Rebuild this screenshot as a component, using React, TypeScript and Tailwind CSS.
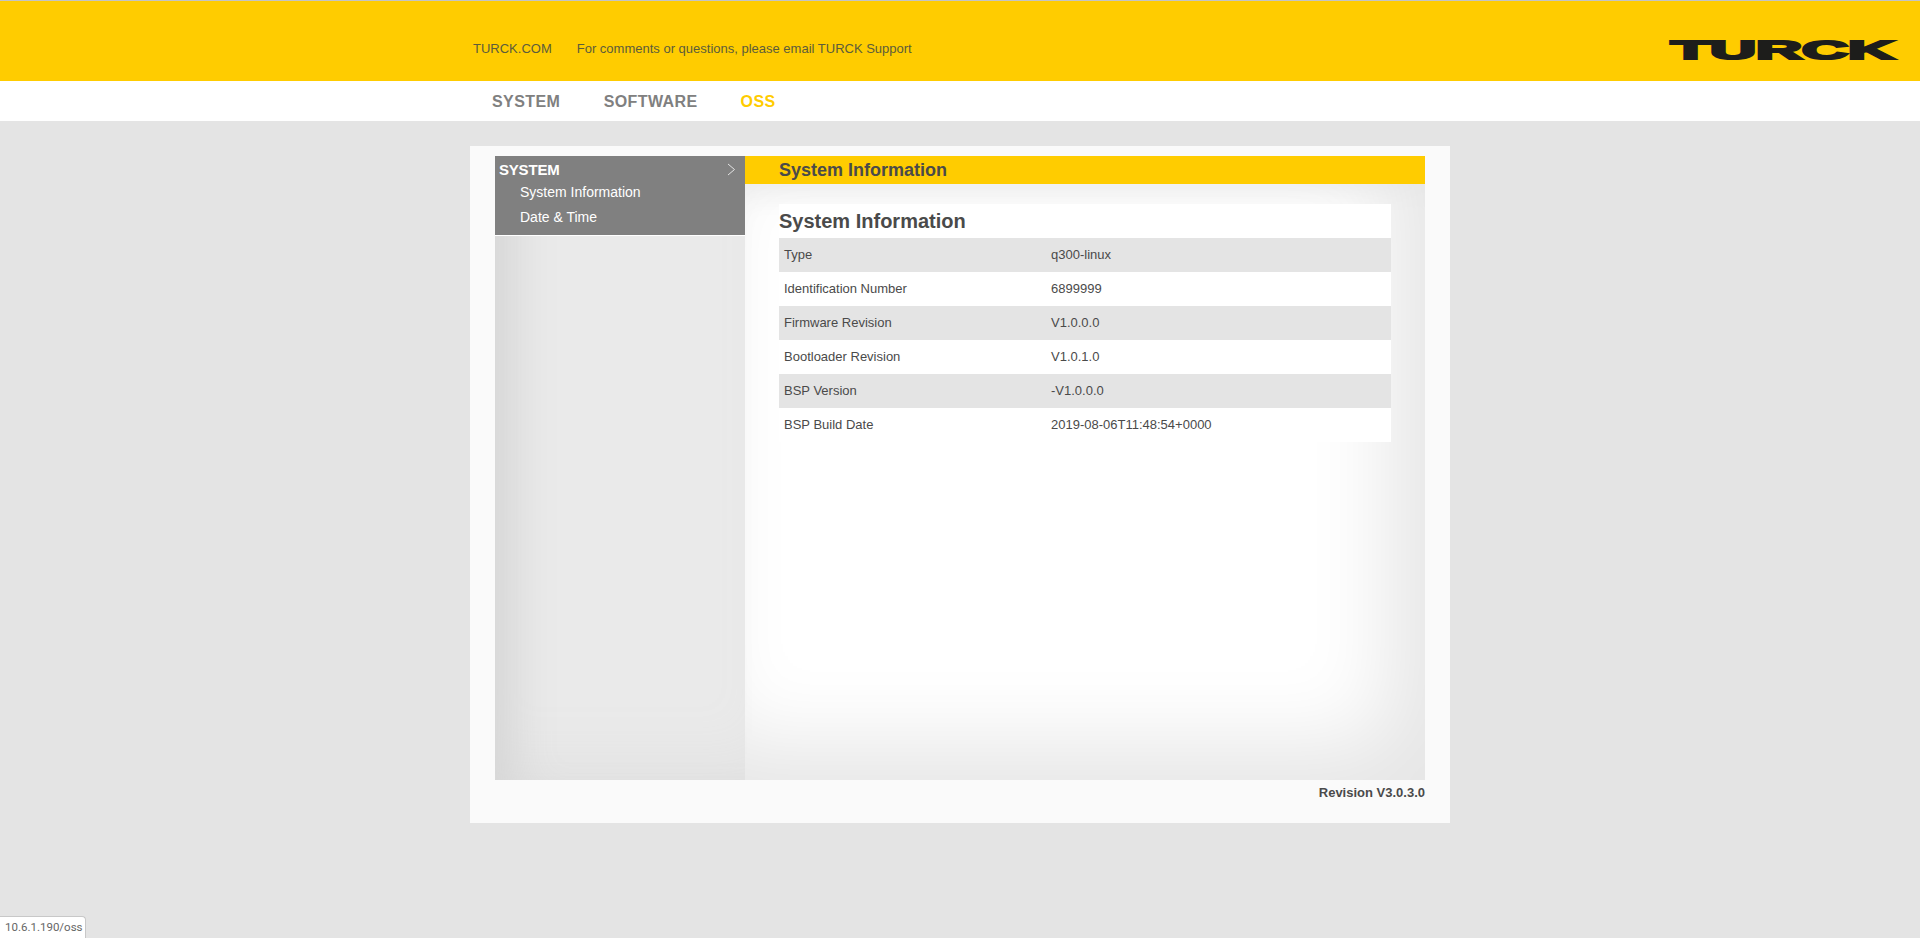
const rows = [
  ["Type", "q300-linux"],
  ["Identification Number", "6899999"],
  ["Firmware Revision", "V1.0.0.0"],
  ["Bootloader Revision", "V1.0.1.0"],
  ["BSP Version", "-V1.0.0.0"],
  ["BSP Build Date", "2019-08-06T11:48:54+0000"],
];

function Logo() {
  return (
    <svg width="231" height="25" viewBox="0 0 231 25" className="block overflow-visible">
      <text
        x="4"
        y="22"
        textLength="223"
        lengthAdjust="spacingAndGlyphs"
        fontFamily="'Liberation Sans', Arial, sans-serif"
        fontWeight="700"
        fontSize="26.5"
        fill="#1d1d1b"
        stroke="#1d1d1b"
        strokeWidth="2.2"
      >
        TURCK
      </text>
    </svg>
  );
}

export default function App() {
  return (
    <div className="relative min-h-screen bg-[#e4e4e4] font-['Liberation_Sans',Arial,sans-serif] text-[#4a4a4a]">
      <header className="h-[81px] border-t border-[#c4c4c4] bg-[#ffcc00] relative">
        <div className="mx-auto w-[980px] flex items-center h-full pt-[15px] pl-[3px] text-[13px] text-[#5c5c3c]">
          <span>TURCK.COM</span>
          <span className="ml-[25px]">For comments or questions, please email TURCK Support</span>
        </div>
        <div className="absolute right-[22px] top-[36px]">
          <Logo />
        </div>
      </header>

      <nav className="h-[40px] bg-white">
        <div className="mx-auto w-[980px] flex items-center h-full pt-[2px] pl-[22px] gap-[43px] text-[16px] font-bold tracking-[0.4px] text-[#808080]">
          <span>SYSTEM</span>
          <span className="pl-[0.5px]">SOFTWARE</span>
          <span className="text-[#ffcc00]">OSS</span>
        </div>
      </nav>

      <main className="mx-auto mt-[25px] w-[980px] h-[677px] bg-[#fafafa] pt-[10px] px-[25px]">
        <div className="flex h-[624px]">
          <aside className="w-[250px] bg-[#eaeaea] shadow-[inset_45px_0_45px_-25px_#d6d6d6,inset_0_-50px_60px_-30px_#e2e2e2]">
            <div className="h-[79px] bg-[#808080] text-white relative">
              <div className="pl-[4px] pt-[5px] text-[15px] leading-[18px] font-bold tracking-[-0.2px]">SYSTEM</div>
              <svg width="9" height="13" viewBox="0 0 9 13" className="absolute right-[9px] top-[7px]" fill="none" stroke="#e4e4e4" strokeWidth="1">
                <path d="M1 1l6.5 5.5L1 12" />
              </svg>
              <div className="pl-[25px] text-[14px] leading-[25px] mt-[1px]">
                <div>System Information</div>
                <div>Date &amp; Time</div>
              </div>
            </div>
            <div className="h-px bg-white" />
          </aside>

          <section className="flex-1 bg-white">
            <div className="h-[28px] bg-[#ffcc00] pl-[34px] text-[18px] leading-[28px] font-bold">
              System Information
            </div>
            <div className="h-[596px] pt-[20px] pl-[34px] shadow-[inset_-36px_-36px_84px_#e6e6e6,inset_0_24px_28px_-14px_#efefef]">
              <div className="w-[612px] bg-white">
                <h2 className="h-[34px] text-[20px] leading-[34px] font-bold">System Information</h2>
                {rows.map(([label, value], i) => (
                  <div key={label} className={`flex h-[34px] items-center text-[13px] ${i % 2 === 0 ? "bg-[#e4e4e4]" : "bg-white"}`}>
                    <span className="w-[272px] pl-[5px]">{label}</span>
                    <span>{value}</span>
                  </div>
                ))}
              </div>
            </div>
          </section>
        </div>
        <div className="mt-[5px] text-right text-[13px] leading-[16px] font-bold">Revision V3.0.3.0</div>
      </main>

      <div className="fixed left-0 bottom-0 h-[22px] w-[86px] rounded-tr-[4px] border-t border-r border-[#c8c8c8] bg-white pl-[5px] font-['Roboto',sans-serif] text-[11.5px] leading-[21px] text-[#666]">
        10.6.1.190/oss
      </div>
    </div>
  );
}
